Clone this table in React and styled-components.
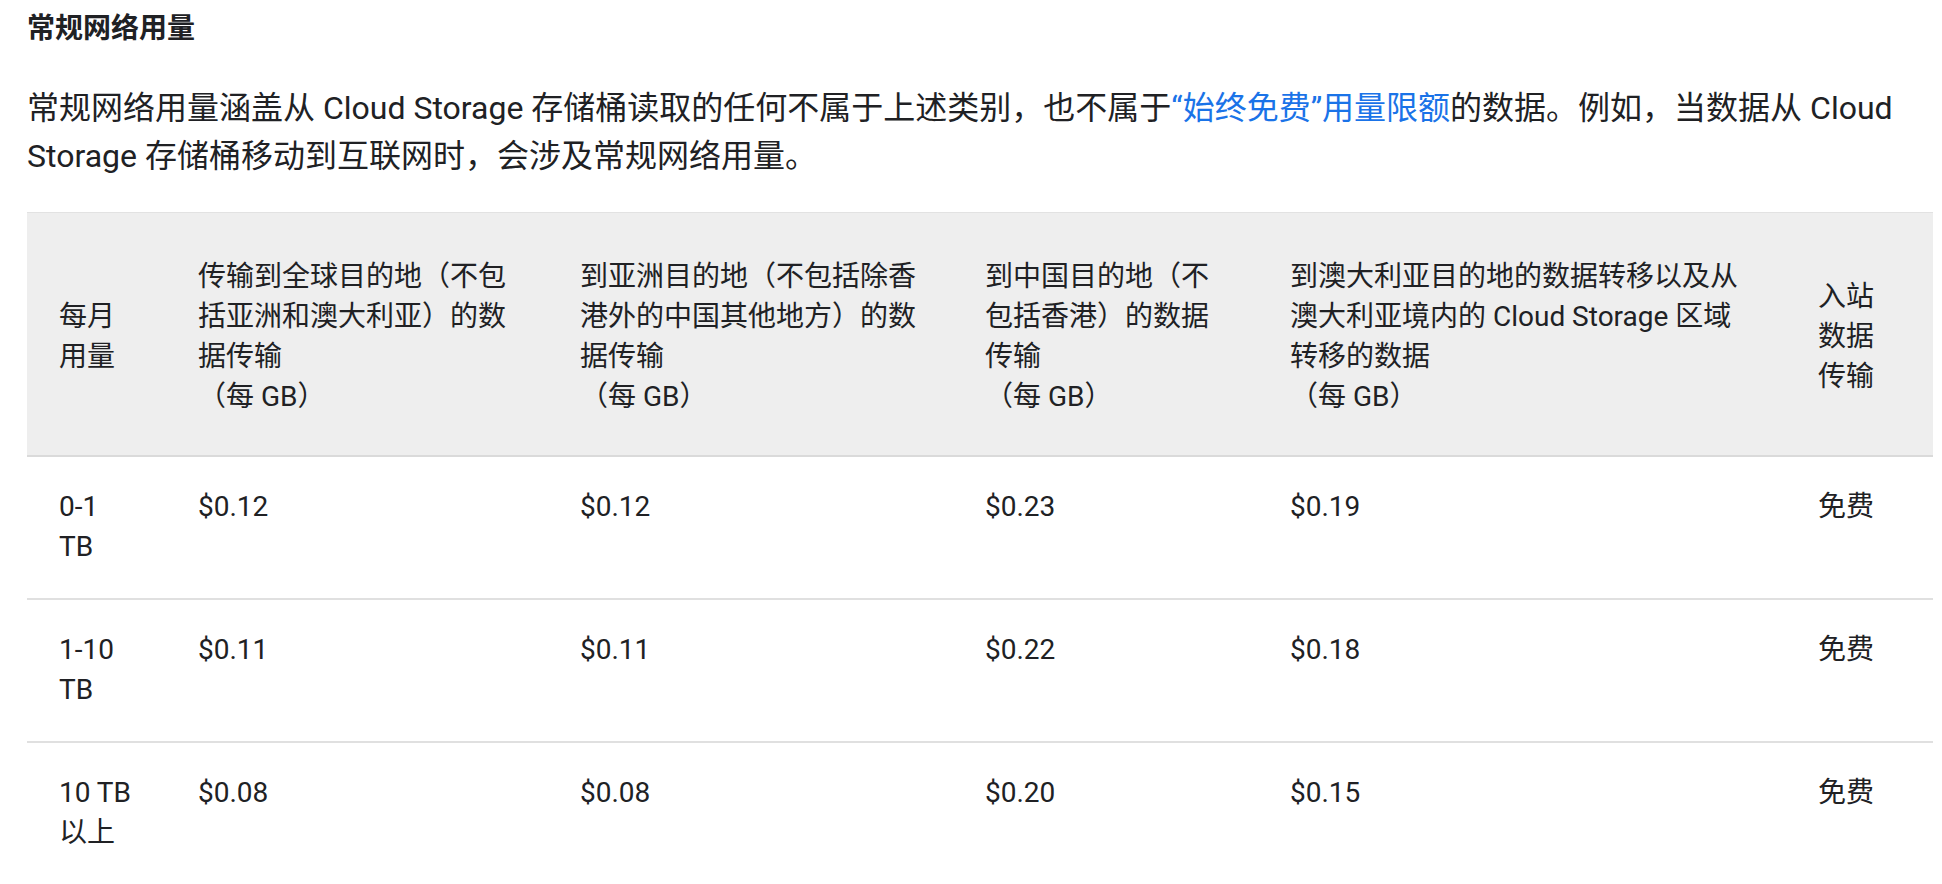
import React from "react";
import styled, { createGlobalStyle } from "styled-components";

const GlobalStyle = createGlobalStyle`
  body {
    margin: 0;
    background: #ffffff;
    font-family: Roboto, "Noto Sans CJK SC", sans-serif;
    color: #202124;
  }
`;

const Page = styled.div`
  padding: 9px 9px 0 27px;
`;

const Title = styled.h4`
  margin: 0;
  font-size: 28px;
  line-height: 40px;
  font-weight: 700;
`;

const Intro = styled.p`
  margin: 35px 0 32px;
  font-size: 32px;
  line-height: 48px;
`;

const Link = styled.a`
  color: #1a73e8;
  text-decoration: none;
`;

const Table = styled.table`
  width: 1906px;
  table-layout: fixed;
  border-collapse: collapse;
  font-size: 28px;
  line-height: 40px;
`;

const HeadRow = styled.tr`
  background: #eeeeee;
  border-top: 1px solid #e2e2e2;
  border-bottom: 2px solid #dadada;
`;

const HeadCell = styled.th`
  text-align: left;
  font-weight: 400;
  vertical-align: middle;
  padding: 44px 32px 38px;
`;

const Row = styled.tr`
  border-bottom: 2px solid #e0e0e0;
`;

const Cell = styled.td`
  vertical-align: top;
  padding: 30px 32px 31px;
`;

const widths = [139, 382, 405, 305, 528, 147];

const headers = [
  "每月用量",
  <>传输到全球目的地（不包括亚洲和澳大利亚）的数据传输<br />（每 GB）</>,
  <>到亚洲目的地（不包括除香港外的中国其他地方）的数据传输<br />（每 GB）</>,
  <>到中国目的地（不包括香港）的数据传输<br />（每 GB）</>,
  <>到澳大利亚目的地的数据转移以及从澳大利亚境内的 Cloud Storage 区域转移的数据<br />（每 GB）</>,
  "入站数据传输",
];

const rows = [
  ["0-1 TB", "$0.12", "$0.12", "$0.23", "$0.19", "免费"],
  ["1-10 TB", "$0.11", "$0.11", "$0.22", "$0.18", "免费"],
  ["10 TB 以上", "$0.08", "$0.08", "$0.20", "$0.15", "免费"],
];

export default function App() {
  return (
    <Page>
      <GlobalStyle />
      <Title>常规网络用量</Title>
      <Intro>
        常规网络用量涵盖从 Cloud Storage 存储桶读取的任何不属于上述类别，也不属于
        <Link href="#">“始终免费”用量限额</Link>
        的数据。例如，当数据从 Cloud Storage 存储桶移动到互联网时，会涉及常规网络用量。
      </Intro>
      <Table>
        <colgroup>
          {widths.map((w, i) => (
            <col key={i} style={{ width: w }} />
          ))}
        </colgroup>
        <thead>
          <HeadRow>
            {headers.map((h, i) => (
              <HeadCell key={i}>{h}</HeadCell>
            ))}
          </HeadRow>
        </thead>
        <tbody>
          {rows.map((r, i) => (
            <Row key={i}>
              {r.map((c, j) => (
                <Cell key={j}>{c}</Cell>
              ))}
            </Row>
          ))}
        </tbody>
      </Table>
    </Page>
  );
}
